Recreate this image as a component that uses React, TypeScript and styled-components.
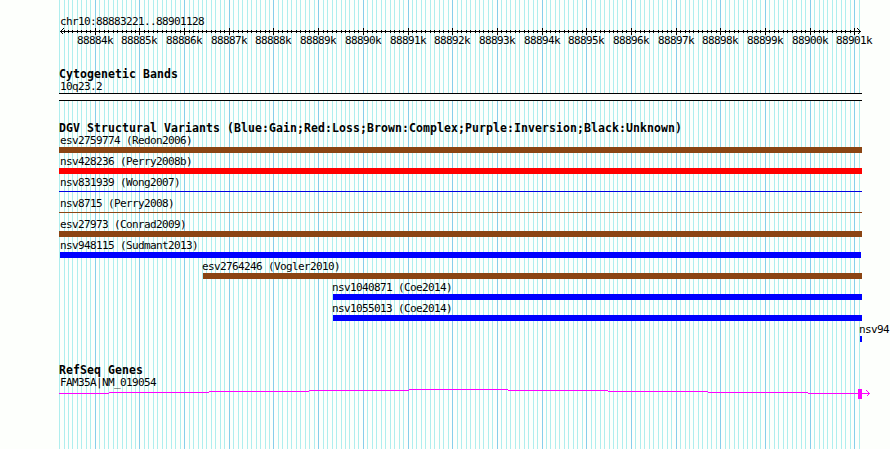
import React from "react";
import styled, { createGlobalStyle } from "styled-components";

const START = 88883221;
const END = 88901128;
const LEFT = 60;
const SCALE = 800 / (END - START);

const toX = (bp: number) => Math.round(LEFT + (bp - START) * SCALE - 0.01);

interface Tick {
  bp: number;
  x: number;
  major: boolean;
}

const ticks: Tick[] = [];
for (let bp = 88883200; bp <= END; bp += 100) {
  ticks.push({ bp, x: toX(bp), major: bp % 1000 === 0 });
}

interface Variant {
  name: string;
  color: string;
  start: number;
  end: number;
  labelAt: number;
  thin?: boolean;
}

const BROWN = "#8b4513";
const BLUE = "#0000ff";

const variants: Variant[] = [
  { name: "esv2759774 (Redon2006)", color: BROWN, start: 59, end: 862, labelAt: 60 },
  { name: "nsv428236 (Perry2008b)", color: "#ff0000", start: 59, end: 862, labelAt: 60 },
  { name: "nsv831939 (Wong2007)", color: "#0000e0", start: 59, end: 862, labelAt: 60, thin: true },
  { name: "nsv8715 (Perry2008)", color: BROWN, start: 59, end: 862, labelAt: 60, thin: true },
  { name: "esv27973 (Conrad2009)", color: BROWN, start: 59, end: 862, labelAt: 60 },
  { name: "nsv948115 (Sudmant2013)", color: BLUE, start: 60, end: 861, labelAt: 60 },
  { name: "esv2764246 (Vogler2010)", color: BROWN, start: 203, end: 862, labelAt: 202 },
  { name: "nsv1040871 (Coe2014)", color: BLUE, start: 333, end: 862, labelAt: 332 },
  { name: "nsv1055013 (Coe2014)", color: BLUE, start: 333, end: 862, labelAt: 332 },
  { name: "nsv94", color: BLUE, start: 860, end: 862, labelAt: 859 },
];

// the intron is drawn as a very shallow hat, one pixel per step
const intron = [
  [59, 109, 4],
  [109, 209, 3],
  [209, 309, 2],
  [309, 409, 1],
  [409, 508, 0],
  [508, 608, 1],
  [608, 708, 2],
  [708, 808, 3],
  [808, 870, 4],
];

const App = () => {
  return (
    <Browser>
      <GlobalStyle />
      <Grid width="890" height="449">
        {ticks.map((t) => (
          <rect key={t.bp} x={t.x} y="0" width="1" height="449" fill={t.major ? "#87ceeb" : "#afeeee"} />
        ))}
      </Grid>

      <Tracks>
        <Label $at={60}>chr10:88883221..88901128</Label>
        <Axis width="890" height="7">
          <rect x="60" y="3" width="801" height="1" />
          {ticks.slice(1).map((t) => (
            <rect key={t.bp} x={t.x} y={t.major ? 0 : 2} width="1" height={t.major ? 7 : 3} />
          ))}
          <path d="M63.5 0.5L60.5 3.5L63.5 6.5M857.5 0.5L860.5 3.5L857.5 6.5" fill="none" stroke="#000" />
        </Axis>
        <AxisLabels>
          {ticks
            .filter((t) => t.major)
            .map((t, i, all) => (
              <AxisLabel key={t.bp} $width={i < all.length - 1 ? all[i + 1].x - t.x : 36}>
                {t.bp / 1000}k
              </AxisLabel>
            ))}
        </AxisLabels>

        <Section $gap={22}>
          <Title>Cytogenetic Bands</Title>
          <Label $at={60}>10q23.2</Label>
          <Band />
        </Section>

        <Section $gap={21}>
          <Title>DGV Structural Variants (Blue:Gain;Red:Loss;Brown:Complex;Purple:Inversion;Black:Unknown)</Title>
          {variants.map((v) => (
            <Row key={v.name}>
              <Label $at={v.labelAt}>{v.name}</Label>
              <Bar $start={v.start} $end={v.end} $color={v.color} $thin={v.thin} />
            </Row>
          ))}
        </Section>

        <Section $gap={20}>
          <Title>RefSeq Genes</Title>
          <Label $at={60}>FAM35A|NM_019054</Label>
          <Gene width="890" height="10">
            {intron.map(([from, to, y]) => (
              <rect key={from} x={from} y={y} width={to - from} height="1" />
            ))}
            <rect x="858" y="0" width="4" height="10" />
            <path d="M866.5 1.5L869.5 4.5L866.5 7.5" fill="none" stroke="#ff00ff" />
          </Gene>
        </Section>
      </Tracks>
    </Browser>
  );
};

const GlobalStyle = createGlobalStyle`
  body {
    margin: 0;
    background: #fdfffc;
  }
`;

const Browser = styled.div`
  position: relative;
  width: 890px;
  height: 449px;
  overflow: hidden;
  color: #000;
  font-family: "DejaVu Sans Mono", monospace;
`;

const Grid = styled.svg`
  position: absolute;
  top: 0;
  left: 0;
  shape-rendering: crispEdges;
`;

const Tracks = styled.div`
  position: relative;
  display: flex;
  flex-direction: column;
  padding-top: 15px;
`;

const Label = styled.div<{ $at: number }>`
  height: 12px;
  padding-left: ${({ $at }) => $at}px;
  font-size: 11px;
  line-height: 14px;
  letter-spacing: -0.623px;
  white-space: nowrap;
`;

const Axis = styled.svg`
  display: block;
  margin-top: 1px;
  shape-rendering: crispEdges;
`;

const AxisLabels = styled.div`
  display: flex;
  height: 12px;
  margin-top: -1px;
  padding-left: 77px;
`;

const AxisLabel = styled.div<{ $width: number }>`
  flex: none;
  width: ${({ $width }) => $width}px;
  font-size: 11px;
  line-height: 14px;
  letter-spacing: -0.623px;
  white-space: nowrap;
`;

const Section = styled.section<{ $gap: number }>`
  display: flex;
  flex-direction: column;
  padding-top: ${({ $gap }) => $gap}px;
`;

const Title = styled.div`
  height: 12px;
  padding-left: 59px;
  font-size: 11.5px;
  font-weight: bold;
  line-height: 12px;
  letter-spacing: 0.077px;
  white-space: nowrap;
`;

const Band = styled.div`
  width: 803px;
  height: 8px;
  box-sizing: border-box;
  margin: 1px 0 0 59px;
  border: solid #000;
  border-width: 1px 0;
  background: #fdfffc;
`;

const Row = styled.div`
  height: 21px;
`;

const Bar = styled.div<{ $start: number; $end: number; $color: string; $thin?: boolean }>`
  width: ${({ $start, $end }) => $end - $start}px;
  height: ${({ $thin }) => ($thin ? 1 : 6)}px;
  margin: ${({ $thin }) => ($thin ? 3 : 1)}px 0 0 ${({ $start }) => $start}px;
  background: ${({ $color }) => $color};
`;

const Gene = styled.svg`
  display: block;
  margin-top: 1px;
  fill: #ff00ff;
  shape-rendering: crispEdges;
`;

export default App;
